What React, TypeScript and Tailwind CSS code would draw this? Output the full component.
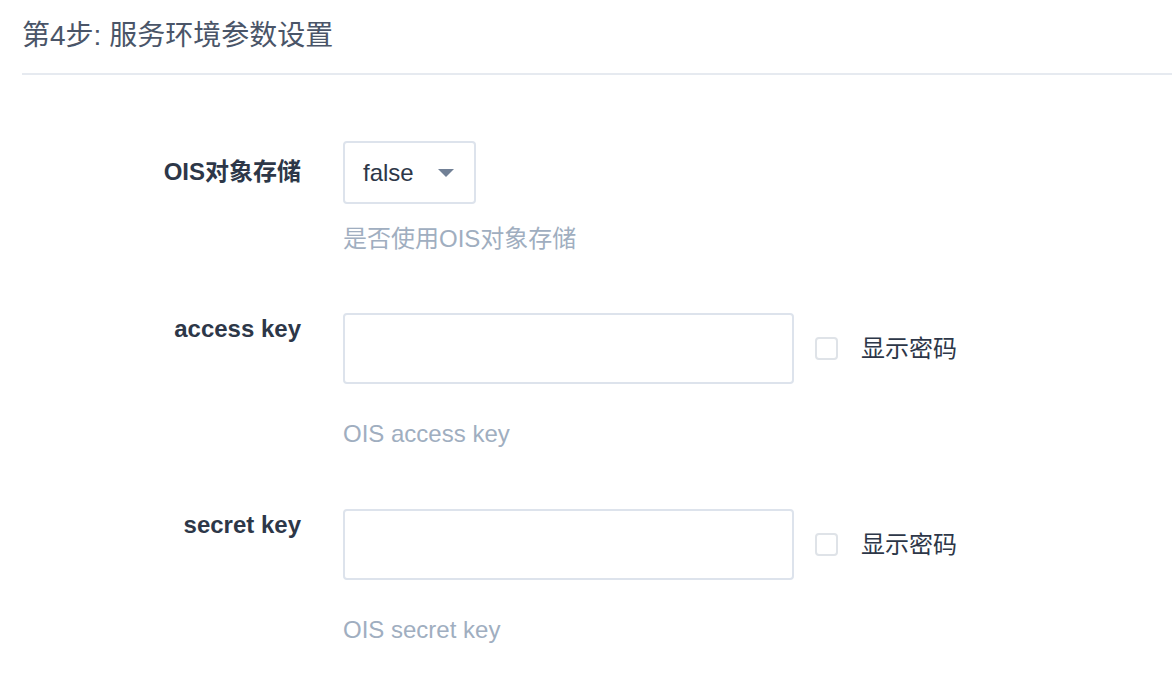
export default function App() {
  const font = { fontFamily: '"Liberation Sans", "Noto Sans CJK SC", sans-serif' };

  return (
    <div className="w-[1172px] h-[696px] bg-white overflow-hidden" style={font}>
      <div className="pl-[22px]">
        <div className="h-[75px] border-b-2 border-[#e6eaf0] flex items-start pt-[19px]">
          <h1 className="text-[28px] leading-[34px] text-[#4a5568]">第4步: 服务环境参数设置</h1>
        </div>

        {/* OIS row */}
        <div className="flex mt-[66px]">
          <label className="w-[279px] text-right pt-[17px] text-[24px] leading-[28px] font-bold text-[#2d3748]">
            OIS对象存储
          </label>
          <div className="ml-[42px]">
            <div className="w-[133px] h-[63px] border-2 border-[#dde3ec] rounded-[4px] flex items-center justify-between pl-[18px] pr-[20px]">
              <span className="text-[24px] text-[#2d3748]">false</span>
              <svg width="16" height="8" viewBox="0 0 16 8">
                <path d="M0 0 L16 0 L8 8 Z" fill="#718096" />
              </svg>
            </div>
            <p className="mt-[21px] text-[24px] leading-[28px] text-[#a0aec0]">是否使用OIS对象存储</p>
          </div>
        </div>

        <FieldRow label="access key" help="OIS access key" top="mt-[60px]" />
        <FieldRow label="secret key" help="OIS secret key" top="mt-[61px]" />
      </div>
    </div>
  );
}

function FieldRow({ label, help, top }: { label: string; help: string; top: string }) {
  return (
    <div className={`flex ${top}`}>
      <label className="w-[279px] text-right pt-[2px] text-[24px] leading-[28px] font-bold text-[#2d3748]">
        {label}
      </label>
      <div className="ml-[42px]">
        <div className="flex items-center">
          <input
            type="password"
            className="w-[451px] h-[71px] border-2 border-[#dde3ec] rounded-[4px] outline-none px-4"
          />
          <span className="ml-[21px] w-[23px] h-[23px] border-2 border-[#dfe3e8] rounded-[4px] bg-white" />
          <span className="ml-[23px] text-[24px] text-[#2d3748]">显示密码</span>
        </div>
        <p className="mt-[36px] text-[24px] leading-[28px] text-[#a0aec0]">{help}</p>
      </div>
    </div>
  );
}
